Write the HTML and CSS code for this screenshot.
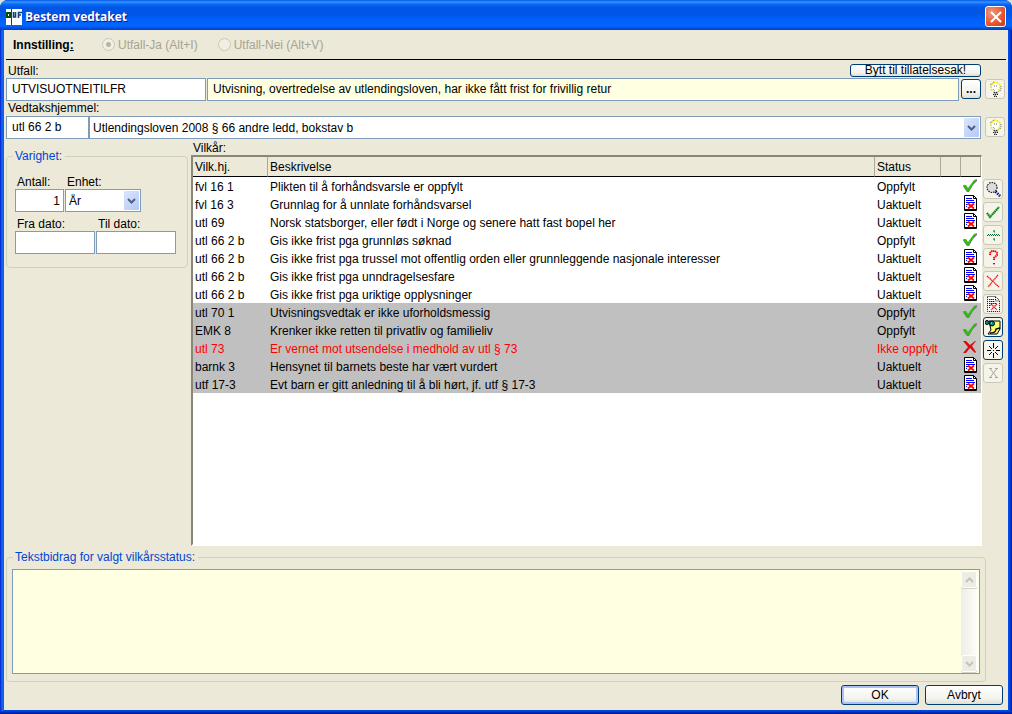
FILE: index.html
```html
<!DOCTYPE html>
<html lang="no">
<head>
<meta charset="utf-8">
<title>Bestem vedtaket</title>
<link rel="stylesheet" href="styles.css">
</head>
<body>
<svg class="defs" aria-hidden="true">
  <symbol id="check" viewBox="0 0 14 14"><path d="M0 8h3l2 3 6-8 3-2v2l-4 4-4 7H4L1 10z" fill="#777"/><path d="M0 7h3l2 3 6-8 2-1-3 5-4 7H4L1 9z" fill="#2fbf0f"/></symbol>
  <symbol id="cross" viewBox="0 0 14 14"><path d="M0 1h3l4 4 5-4h1L9 6l4 6-1 1-5-5-4 5H0l5-6z" fill="#e00808"/></symbol>
  <symbol id="doc" viewBox="0 0 13 16"><path d="M.5.5h9l3 3v12H.5z" fill="#fff" stroke="#000"/><path d="M1 14.500h11M9.500 .5v3h3" fill="none" stroke="#000"/><path d="M2 3.500h6M2 5.500h8M2 7.500h9M2 9.500h2M2 11.500h1" stroke="#0000ff"/><path d="M4 8.500l6 5M10 8.500l-6 5" stroke="#ff0000" stroke-width="1.800"/></symbol>
  <symbol id="bulb" viewBox="0 0 16 16"><path d="M8 1L4 4v4l3 3h3l3-3V4L9 1z" fill="#fff" stroke="#f0e800" stroke-width="1.600" stroke-dasharray="2 1"/><path d="M3 4l4-3M14 5v4l-3 2M7 5h3M6 8l2 2" stroke="#777" stroke-dasharray="1 1" fill="none"/><path d="M6 11h5v3H9v2H7v-3z" fill="#aaa"/><path d="M7 11.500h4M6 13.500h5M7 15.500h3" stroke="#222" stroke-dasharray="1 1"/></symbol>
  <symbol id="chevron" viewBox="0 0 9 6"><path d="M1 1l3.500 3.500L8 1" fill="none" stroke="currentColor" stroke-width="2"/></symbol>
</svg>
<div class="window">
  <header class="titlebar">
    <svg class="logo" viewBox="0 0 16 16" aria-hidden="true"><path d="M0 0h16v16H0z" fill="#fff"/><path d="M0 3h5v6H0z" fill="#064d12"/><path d="M2 5h1v2H2z" fill="#fff"/><path d="M5.500 0v16" stroke="#124078"/><path d="M7.500 3v5h2V3M12.500 9V3.500H16M12 6h3" fill="none" stroke="#124078" stroke-width="1.600"/></svg>
    <h1>Bestem vedtaket</h1>
    <button class="close" aria-label="Lukk"><svg viewBox="0 0 12 12"><path d="M1 1l10 10M11 1L1 11" stroke="#fff" stroke-width="2"/></svg></button>
  </header>
  <main>
    <div class="outcome">
      <b>Innstillin<u>g:</u></b>
      <label><input type="radio" name="utfall" checked disabled>Utfall-Ja (Alt+I)</label>
      <label><input type="radio" name="utfall" disabled>Utfall-Nei (Alt+V)</label>
    </div>
    <div class="labelrow first"><label for="utfall">Utfall:</label><button class="btn swap">Bytt til tillatelsesak!</button></div>
    <div class="fields">
      <input class="code" id="utfall" value="UTVISUOTNEITILFR">
      <input class="desc" aria-label="Utfall beskrivelse" readonly value="Utvisning, overtredelse av utlendingsloven, har ikke fått frist for frivillig retur">
      <button class="btn more">...</button>
      <button class="tool off" aria-label="Tips utfall" disabled><svg><use href="#bulb"/></svg></button>
    </div>
    <div class="labelrow"><label for="hjemmel">Vedtakshjemmel:</label></div>
    <div class="fields">
      <input class="short" id="hjemmel" value="utl 66 2 b">
      <div class="combo"><select aria-label="Vedtakshjemmel"><option>Utlendingsloven 2008 § 66 andre ledd, bokstav b</option></select><span class="arrow"><svg><use href="#chevron"/></svg></span></div>
      <button class="tool off" aria-label="Tips hjemmel" disabled><svg><use href="#bulb"/></svg></button>
    </div>
    <div class="middle">
      <fieldset class="duration">
        <legend>Varighet:</legend>
        <div class="pair">
          <div class="count"><label for="antall">Antall:</label><input id="antall" value="1"></div>
          <div class="unit"><label for="enhet">Enhet:</label><div class="combo"><select id="enhet"><option>År</option></select><span class="arrow"><svg><use href="#chevron"/></svg></span></div></div>
        </div>
        <div class="pair">
          <div class="date"><label for="fra">Fra dato:</label><input id="fra"></div>
          <div class="date"><label for="til">Til dato:</label><input id="til"></div>
        </div>
      </fieldset>
      <section class="conditions">
        <h2>Vilkår:</h2>
        <div class="list">
          <table>
            <colgroup><col class="c-ref"><col><col class="c-status"><col class="c-icon"><col class="c-icon"></colgroup>
            <thead><tr><th>Vilk.hj.</th><th>Beskrivelse</th><th>Status</th><th></th><th></th></tr></thead>
            <tbody>
              <tr><td>fvl 16 1</td><td>Plikten til å forhåndsvarsle er oppfylt</td><td>Oppfylt</td><td></td><td><svg class="mark"><use href="#check"/></svg></td></tr>
              <tr><td>fvl 16 3</td><td>Grunnlag for å unnlate forhåndsvarsel</td><td>Uaktuelt</td><td></td><td><svg class="page"><use href="#doc"/></svg></td></tr>
              <tr><td>utl 69</td><td>Norsk statsborger, eller født i Norge og senere hatt fast bopel her</td><td>Uaktuelt</td><td></td><td><svg class="page"><use href="#doc"/></svg></td></tr>
              <tr><td>utl 66 2 b</td><td>Gis ikke frist pga grunnløs søknad</td><td>Oppfylt</td><td></td><td><svg class="mark"><use href="#check"/></svg></td></tr>
              <tr><td>utl 66 2 b</td><td>Gis ikke frist pga trussel mot offentlig orden eller grunnleggende nasjonale interesser</td><td>Uaktuelt</td><td></td><td><svg class="page"><use href="#doc"/></svg></td></tr>
              <tr><td>utl 66 2 b</td><td>Gis ikke frist pga unndragelsesfare</td><td>Uaktuelt</td><td></td><td><svg class="page"><use href="#doc"/></svg></td></tr>
              <tr><td>utl 66 2 b</td><td>Gis ikke frist pga uriktige opplysninger</td><td>Uaktuelt</td><td></td><td><svg class="page"><use href="#doc"/></svg></td></tr>
              <tr class="grey"><td>utl 70 1</td><td>Utvisningsvedtak er ikke uforholdsmessig</td><td>Oppfylt</td><td></td><td><svg class="mark"><use href="#check"/></svg></td></tr>
              <tr class="grey"><td>EMK 8</td><td>Krenker ikke retten til privatliv og familieliv</td><td>Oppfylt</td><td></td><td><svg class="mark"><use href="#check"/></svg></td></tr>
              <tr class="grey failed"><td>utl 73</td><td>Er vernet mot utsendelse i medhold av utl § 73</td><td>Ikke oppfylt</td><td></td><td><svg class="mark"><use href="#cross"/></svg></td></tr>
              <tr class="grey"><td>barnk 3</td><td>Hensynet til barnets beste har vært vurdert</td><td>Uaktuelt</td><td></td><td><svg class="page"><use href="#doc"/></svg></td></tr>
              <tr class="grey"><td>utf 17-3</td><td>Evt barn er gitt anledning til å bli hørt, jf. utf § 17-3</td><td>Uaktuelt</td><td></td><td><svg class="page"><use href="#doc"/></svg></td></tr>
            </tbody>
          </table>
        </div>
      </section>
      <div class="tools">
        <button class="tool off" aria-label="Søk" disabled><svg viewBox="0 0 16 16"><circle cx="7" cy="6.500" r="5" fill="#dcdcdc" stroke="#222" stroke-width="1.200" stroke-dasharray="1.500 1"/><path d="M11 10l5 5M10 11l5 5" stroke="#000080" stroke-width="1.200" stroke-dasharray="1.500 1"/></svg></button>
        <button class="tool off" aria-label="Oppfylt" disabled><svg viewBox="0 0 16 16"><path d="M2 9l3 4L14 3" fill="none" stroke="#9c9" stroke-width="2.500"/><path d="M2 9l3 4L14 3" fill="none" stroke="#008000" stroke-width="1.800" stroke-dasharray="1.300 .7"/></svg></button>
        <button class="tool off" aria-label="Uaktuelt" disabled><svg viewBox="0 0 16 16"><path d="M2 8.500h13M3 7.500h12" stroke="#006b20" stroke-dasharray="1 1"/><path d="M8 4h2M9 5h1M8 12h2M9 13h1" stroke="#006b20"/></svg></button>
        <button class="tool off" aria-label="Ukjent" disabled><svg viewBox="0 0 16 16"><path d="M5 5V3l2-2h3l2 2v2L9 8v2M9 13v2" fill="none" stroke="#f99" stroke-width="2"/><path d="M5 5V3l2-2h3l2 2v2L9 8v2M9 13v2" fill="none" stroke="#e00" stroke-width="2" stroke-dasharray="1 1"/></svg></button>
        <button class="tool off" aria-label="Ikke oppfylt" disabled><svg viewBox="0 0 16 16"><path d="M2 3l12 11M13 2L3 14" stroke="#e11" stroke-width="1.300" stroke-dasharray="1.400 .5"/></svg></button>
        <button class="tool off" aria-label="Dokument" disabled><svg viewBox="0 0 16 16"><path d="M2.500.5h8l4 4v11h-12zM10.500 1v4h4" fill="#fff" stroke="#000" stroke-dasharray="1 1"/><path d="M4 3.500h5M4 5.500h6M4 7.500h8M4 9.500h2M4 11.500h1" stroke="#00f" stroke-dasharray="1.500 .5"/><path d="M6 8l6 6M12 8l-6 6" stroke="#e11" stroke-width="1.400" stroke-dasharray="1.400 .5"/></svg></button>
        <button class="tool" aria-label="Notat"><svg viewBox="0 0 16 16"><path d="M4 2h11v8l-3 5H3l3-4z" fill="#ffff70" stroke="#000"/><path d="M5 14c4 0 6-1 6-4l4-1" fill="none" stroke="#000" stroke-width="1.300"/><circle cx="2" cy="3.500" r="2" fill="#008c8c" stroke="#000"/><circle cx="7" cy="4.500" r="2.500" fill="#008c8c" stroke="#000"/><path d="M6 4h1" stroke="#fff"/></svg></button>
        <button class="tool" aria-label="Ny"><svg viewBox="0 0 16 16"><path d="M2 8.500h4M11 8.500h4M8.500 1v5M8.500 11v5M4 4l3 3M10 10l3 3M13 4l-3 3M7 10l-3 3M8 8.500h1" stroke="#000"/></svg></button>
        <button class="tool off" aria-label="Slett" disabled><svg viewBox="0 0 16 16"><path d="M5.500 4l6 8M11.500 4l-6 8M4 3.500h3M10 3.500h3M4 12.500h3M10 12.500h3" stroke="#aca899"/></svg></button>
      </div>
    </div>
    <fieldset class="contribution">
      <legend>Tekstbidrag for valgt vilkårsstatus:</legend>
      <div class="textbox">
        <textarea aria-label="Tekstbidrag for valgt vilkårsstatus" readonly></textarea>
        <div class="scroll"><button aria-label="Opp" disabled><svg class="up"><use href="#chevron"/></svg></button><button aria-label="Ned" disabled><svg><use href="#chevron"/></svg></button></div>
      </div>
    </fieldset>
    <footer><button class="btn ok">OK</button><button class="btn">Avbryt</button></footer>
  </main>
</div>
</body>
</html>
```
FILE: styles.css
```css
* { box-sizing: border-box; }
body {
  margin: 0;
  background: #d9e2dc;
  font: 12px/14px "Liberation Sans", Arial, sans-serif;
  color: #000;
}
button, input, select, textarea { font: inherit; color: inherit; margin: 0; }
button { padding: 0; }
svg { display: block; }
.defs { position: absolute; width: 0; height: 0; }

.window {
  display: flex;
  flex-direction: column;
  min-height: 100vh;
  background:
    linear-gradient(transparent calc(100% - 3px), #0044dd calc(100% - 3px), #00138c),
    linear-gradient(90deg, #0831d9 1px, #0a52ee 1px, #166aee 3px, #0855dd 4px, transparent 4px, transparent calc(100% - 4px), #0052ee calc(100% - 4px), #0044dd calc(100% - 2px), #00138c),
    #0048e0;
  border-radius: 8px 8px 0 0;
  overflow: hidden;
}
.titlebar {
  display: flex;
  align-items: center;
  gap: 3px;
  height: 30px;
  padding: 3px 6px 0;
  background: linear-gradient(#0058e6 0, #3a93ff 2px, #0a6cf5 4px, #0058e6 7px, #0055e5 14px, #0060fc 20px, #0066ff 26px, #0050dd 28px, #003dc8 30px);
}
.logo { width: 16px; height: 16px; }
.titlebar h1 {
  flex: 1;
  margin: 0;
  font: bold 12px/18px "Open Sans", sans-serif;
  color: #fff;
  text-shadow: 1px 1px #0a1883;
}
.close {
  display: grid;
  place-items: center;
  width: 21px;
  height: 21px;
  border: 1px solid #fff;
  border-radius: 3px;
  background: radial-gradient(circle at 30% 30%, #f0987c, #e5562f 60%, #c83a12);
}
.close svg { width: 12px; height: 12px; }

main {
  flex: 1;
  display: flex;
  flex-direction: column;
  margin: 0 4px 4px;
  padding: 0 2px 5px;
  background: #ece9d8;
}
.outcome {
  display: flex;
  align-items: center;
  height: 30px;
  padding: 0 7px;
  border-bottom: 1px solid #000;
  color: #a7a392;
}
.outcome b { width: 89px; color: #000; }
.outcome label { display: flex; align-items: center; gap: 3px; margin-right: 20px; }
.outcome input {
  appearance: none;
  width: 13px;
  height: 13px;
  border: 1px solid #cac8bb;
  border-radius: 50%;
  background: #f1efe4;
}
.outcome input:checked { background: radial-gradient(circle, #b8b5a5 2px, #f1efe4 3px); }

.labelrow { display: flex; justify-content: space-between; height: 15px; padding: 0 25px 0 2px; }
.labelrow.first { height: 18px; padding-top: 4px; }
.btn {
  border: 1px solid #003c74;
  border-radius: 3px;
  background: linear-gradient(#fff, #f3f3ee 70%, #e0ddd0);
}
.swap { width: 131px; height: 13px; line-height: 11px; }
.fields { display: flex; height: 23px; align-items: flex-start; }
input, select, textarea { border: 1px solid #7f9db9; border-radius: 0; background: #fff; outline: 0; }
.fields > input { height: 23px; padding: 0 5px 2px; }
.fields .code { width: 200px; margin-right: 1px; }
.fields .desc { flex: 1; background: #ffffe1; margin-right: 2px; }
.fields .short { width: 83px; }
.more { width: 20px; height: 20px; margin-top: 1px; font-weight: bold; }
.combo { flex: 1; display: grid; height: 23px; }
.combo select { grid-area: 1 / 1; appearance: none; width: 100%; height: 23px; padding: 0 20px 0 3px; }
.arrow {
  grid-area: 1 / 1;
  justify-self: end;
  align-self: center;
  display: grid;
  place-items: center;
  width: 15px;
  height: 19px;
  margin-right: 2px;
  border-radius: 1px;
  background: linear-gradient(135deg, #dbe6fd, #b4c8f6);
  color: #4d6185;
  pointer-events: none;
}
.arrow svg { width: 9px; height: 6px; }
.tool {
  display: grid;
  place-items: center;
  width: 20px;
  height: 20px;
  border: 1px solid #003c74;
  border-radius: 3px;
  background: #f6f5ee;
}
.tool.off { border-color: #cbc8b8; background: #f5f4ea; }
.tool svg { width: 16px; height: 16px; }
.fields .tool { margin: 1px 1px 0 4px; }

.middle { flex: 1; display: flex; align-items: flex-start; padding-top: 2px; }
fieldset { min-width: 0; margin: 0; border: 1px solid #d0d0bf; border-radius: 4px; }
legend { padding: 0 3px 0 2px; color: #0046d5; }
.duration { width: 182px; margin-top: 8px; padding: 12px 8px 13px; }
.duration legend { margin-left: -2px; }
.contribution legend { margin-left: 1px; }
.pair { display: flex; gap: 1px; }
.pair + .pair { margin-top: 5px; }
.pair label { display: block; padding-left: 2px; }
.pair input { display: block; width: 100%; height: 23px; padding: 0 3px; }
.pair .count input { text-align: right; }
.count { width: 49px; }
.unit { width: 76px; }
.date { width: 80px; }
.conditions { flex: 1; align-self: stretch; display: flex; flex-direction: column; margin-left: 3px; }
.conditions h2 { margin: 0; padding-left: 2px; font: inherit; }
.list {
  flex: 1;
  border: solid;
  border-width: 2px 1px 2px 2px;
  border-color: #8a8778 #fff #fff #8a8778;
  background: #fff;
}
table { width: 100%; border-collapse: separate; border-spacing: 0; table-layout: fixed; }
.c-ref { width: 75px; }
.c-status { width: 66px; }
.c-icon { width: 20px; }
th {
  height: 20px;
  padding: 0 2px;
  border-right: 1px solid #aca899;
  border-bottom: 1px solid #000;
  background: #ece9d8;
  font-weight: normal;
  text-align: left;
}
td { height: 18px; padding: 2px 2px 0; white-space: nowrap; }
td:last-child { padding: 0 2px; vertical-align: top; }
.grey td { background: #c0c0c0; }
.failed { color: #f00; }
.mark { width: 14px; height: 16px; }
.page { width: 13px; height: 16px; margin-left: 1px; }
.tools { display: grid; gap: 3px; width: 20px; margin: 38px 3px 0 1px; }

.contribution { margin: 4px 20px 3px 0; padding: 5px 5px 7px; }
.textbox { display: flex; height: 105px; border: 1px solid #7f9db9; background: #ffffe1; }
.textbox textarea { flex: 1; border: 0; background: transparent; resize: none; }
.scroll { display: flex; flex-direction: column; justify-content: space-between; width: 17px; margin: 1px; background: linear-gradient(90deg, #eeede5, #fefefb); }
.scroll button {
  display: grid;
  place-items: center;
  width: 16px;
  height: 17px;
  border: 1px solid #fff;
  border-radius: 2px;
  background: #eeede5;
  box-shadow: 0 1px #d5d3c5;
  color: #c5c3b5;
}
.scroll svg { width: 9px; height: 6px; }
.scroll .up { transform: rotate(180deg); }
footer { display: flex; justify-content: flex-end; gap: 6px; padding-right: 3px; }
footer .btn { width: 78px; height: 20px; }
footer .ok { box-shadow: inset 0 0 0 2px #a9c3f5; }
```
